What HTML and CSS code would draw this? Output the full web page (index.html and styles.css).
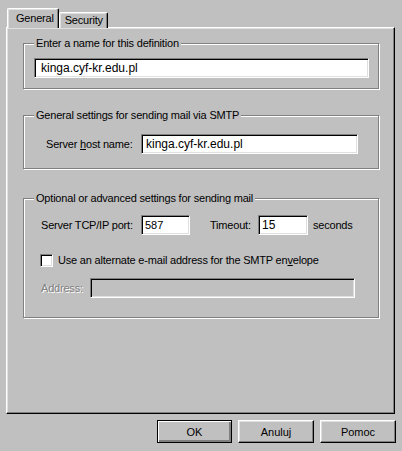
FILE: index.html
```html
<!DOCTYPE html>
<html lang="en">
<head>
    <meta charset="UTF-8">
    <meta name="viewport" content="width=device-width, initial-scale=1.0">
    <title>SMTP definition</title>
    <link rel="stylesheet" href="styles.css">
</head>
<body>
    <div class="dialog">
        <!-- Tabs -->
        <div class="tabs">
            <div class="tab active">General</div>
            <div class="tab">Security</div>
        </div>

        <div class="panel">
            <div class="group group-name">
                <div class="group-title">Enter a name for this definition</div>
                <input type="text" class="field field-wide" value="kinga.cyf-kr.edu.pl">
            </div>

            <div class="group group-smtp">
                <div class="group-title">General settings for sending mail via SMTP</div>
                <div class="row row-host">
                    <label class="label-host">Server <u>h</u>ost name:</label>
                    <input type="text" class="field field-host" value="kinga.cyf-kr.edu.pl">
                </div>
            </div>

            <div class="group group-advanced">
                <div class="group-title">Optional or advanced settings for sending mail</div>
                <div class="row row-port">
                    <label class="label-port">Server TCP/IP port:</label>
                    <input type="text" class="field field-small field-port" value="587">
                    <label class="label-timeout">Timeout:</label>
                    <input type="text" class="field field-small field-timeout" value="15">
                    <span class="unit">seconds</span>
                </div>
                <div class="row row-check">
                    <span class="check"></span>
                    <span>Use an alternate e-mail address for the SMTP en<u>v</u>elope</span>
                </div>
                <div class="row row-address">
                    <label class="label-port disabled">Address:</label>
                    <input type="text" class="field field-address" disabled>
                </div>
            </div>
        </div>

        <div class="buttons">
            <button class="btn btn-default">OK</button>
            <button class="btn">Anuluj</button>
            <button class="btn">Pomoc</button>
        </div>
    </div>
</body>
</html>
```

FILE: styles.css
```css
body, html {
    margin: 0;
    padding: 0;
    background-color: #c0c0c0;
    font-family: "Liberation Sans", Arial, sans-serif;
    font-size: 11px;
    color: #000;
}
.dialog {
    width: 402px;
    height: 451px;
    box-sizing: border-box;
    line-height: 13px;
    letter-spacing: -0.2px;
}
.tabs {
    display: flex;
    align-items: flex-end;
    padding: 8px 0 0 7px;
    height: 20px;
    box-sizing: content-box;
    margin-bottom: -1px;
}
.tab {
    box-sizing: border-box;
    height: 16px;
    padding: 1px 4px 0 5px;
    border: 1px solid;
    border-color: #fff #000 transparent #fff;
    border-bottom: none;
    border-radius: 2px 2px 0 0;
    box-shadow: inset -1px 0 #808080, inset 1px 1px #dfdfdf;
    background-color: #c0c0c0;
}
.tab.active {
    height: 20px;
    padding: 3px 4px 0 8px;
    position: relative;
    z-index: 1;
}
.panel {
    margin-left: 6px;
    width: 389px;
    height: 387px;
    box-sizing: border-box;
    border: 1px solid;
    border-color: #fff #000 #000 #fff;
    box-shadow: inset -1px -1px #808080, inset 1px 1px #dfdfdf;
    padding: 15px 15px 0 16px;
}
.group {
    border: 1px solid #808080;
    box-shadow: 1px 1px 0 #fff, inset 1px 1px 0 #fff;
    padding: 0 9px 0 10px;
}
.group-title {
    margin-top: -7px;
    height: 13px;
    width: fit-content;
    padding: 0 2px;
    background-color: #c0c0c0;
    white-space: nowrap;
}
.group-name {
    padding-bottom: 10px;
}
.group-smtp {
    margin-top: 26px;
    padding-bottom: 14px;
}
.group-advanced {
    margin-top: 29px;
    padding-bottom: 19px;
}
.row {
    display: flex;
    align-items: center;
    white-space: nowrap;
}
.row-host {
    margin-top: 12px;
    padding-left: 12px;
}
.label-host {
    width: 95px;
}
.row-port {
    margin-top: 10px;
    padding-left: 7px;
}
.label-port {
    width: 100px;
}
.label-timeout {
    margin-left: 20px;
    width: 48px;
}
.unit {
    margin-left: 5px;
}
.row-check {
    margin-top: 19px;
    padding-left: 6px;
    height: 13px;
}
.check {
    display: inline-block;
    width: 13px;
    height: 13px;
    box-sizing: border-box;
    border: 1px solid;
    border-color: #808080 #fff #fff #808080;
    box-shadow: inset 1px 1px #000, inset -1px -1px #dfdfdf;
    background-color: #fff;
    margin-right: 5px;
}
.row-address {
    margin-top: 11px;
    padding-left: 7px;
}
.row-address .label-port {
    width: 49px;
}
.disabled {
    color: #808080;
    text-shadow: 1px 1px 0 #fff;
}
.field {
    box-sizing: border-box;
    height: 20px;
    margin: 0;
    padding: 0 4px;
    border: 1px solid;
    border-color: #808080 #fff #fff #808080;
    box-shadow: inset 1px 1px #000, inset -1px -1px #dfdfdf;
    background-color: #fff;
    font-family: "Liberation Sans", Arial, sans-serif;
    font-size: 12px;
    color: #000;
    outline: none;
}
.field.field-wide {
    margin-top: 8px;
    width: 335px;
    padding-left: 6px;
}
.field.field-host {
    width: 217px;
}
.field.field-small {
    font-size: 11px;
    padding-left: 3px;
}
.field.field-port {
    width: 49px;
}
.field.field-timeout {
    width: 50px;
    font-size: 12px;
}
.field.field-address {
    width: 265px;
    background-color: #c0c0c0;
}
.buttons {
    display: flex;
    justify-content: flex-end;
    gap: 6px;
    margin-top: 6px;
    padding-right: 6px;
}
.btn {
    width: 76px;
    height: 23px;
    box-sizing: border-box;
    margin: 0;
    padding: 0;
    border: 1px solid;
    border-color: #fff #000 #000 #fff;
    box-shadow: inset -1px -1px #808080, inset 1px 1px #dfdfdf;
    background-color: #c0c0c0;
    font-family: "Liberation Sans", Arial, sans-serif;
    font-size: 11px;
    color: #000;
}
.btn-default {
    width: 75px;
    border-color: #000;
    box-shadow: inset 1px 1px #fff, inset -1px -1px #808080, inset -2px -2px #808080;
}
```
